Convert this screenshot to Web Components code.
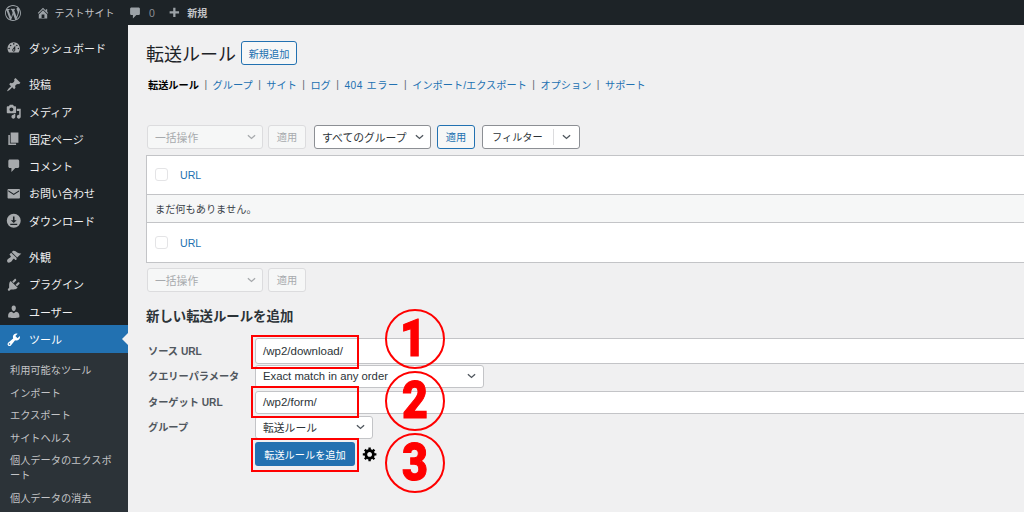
<!DOCTYPE html>
<html lang="ja"><head><meta charset="utf-8"><title>転送ルール</title>
<style>
html,body{margin:0;padding:0;height:512px;overflow:hidden;background:#f0f0f1}
body{font-family:"Liberation Sans","Noto Sans CJK JP",sans-serif;font-size:10.2px;color:#3c434a;position:relative}
wp-shell{width:1024px;height:512px}
</style></head><body>
<wp-shell>
  <wp-adminbar slot="bar"></wp-adminbar>
  <wp-sidebar slot="side">
    <wp-menu icon="dash">ダッシュボード</wp-menu>
    <wp-gap></wp-gap>
    <wp-menu icon="pin">投稿</wp-menu>
    <wp-menu icon="media">メディア</wp-menu>
    <wp-menu icon="page">固定ページ</wp-menu>
    <wp-menu icon="comment">コメント</wp-menu>
    <wp-menu icon="mail">お問い合わせ</wp-menu>
    <wp-menu icon="down">ダウンロード</wp-menu>
    <wp-gap></wp-gap>
    <wp-menu icon="brush">外観</wp-menu>
    <wp-menu icon="plug">プラグイン</wp-menu>
    <wp-menu icon="user">ユーザー</wp-menu>
    <wp-menu icon="tool" current>ツール</wp-menu>
    <wp-submenu>
      <wp-subitem>利用可能なツール</wp-subitem>
      <wp-subitem>インポート</wp-subitem>
      <wp-subitem>エクスポート</wp-subitem>
      <wp-subitem>サイトヘルス</wp-subitem>
      <wp-subitem>個人データのエクスポート</wp-subitem>
      <wp-subitem>個人データの消去</wp-subitem>
    </wp-submenu>
  </wp-sidebar>
  <wp-main slot="main">
    <wp-title>転送ルール</wp-title>
    <wp-tabs></wp-tabs>
    <wp-toolbar top></wp-toolbar>
    <wp-table></wp-table>
    <wp-toolbar></wp-toolbar>
    <wp-addform></wp-addform>
  </wp-main>
  <wp-marks slot="main"></wp-marks>
</wp-shell>
<script>
const P={
wp:'M20 10c0-5.51-4.49-10-10-10C4.48 0 0 4.49 0 10c0 5.52 4.48 10 10 10 5.51 0 10-4.48 10-10zM7.78 15.37L4.37 6.22c.55-.02 1.17-.08 1.17-.08.5-.06.44-1.13-.06-1.11 0 0-1.45.11-2.37.11-.18 0-.37 0-.58-.01C4.12 2.69 6.87 1.11 10 1.11c2.33 0 4.45.87 6.05 2.34-.68-.11-1.65.39-1.65 1.58 0 .74.45 1.36.9 2.1.35.61.55 1.36.55 2.46 0 1.49-1.4 5-1.4 5l-3.03-8.37c.54-.02.82-.17.82-.17.5-.05.44-1.25-.06-1.22 0 0-1.44.12-2.38.12-.87 0-2.33-.12-2.33-.12-.5-.03-.56 1.2-.06 1.22l.92.08 1.26 3.41zM17.41 10c.24-.64.74-1.87.43-4.25.7 1.29 1.05 2.71 1.05 4.25 0 3.29-1.73 6.24-4.4 7.78.97-2.59 1.94-5.2 2.92-7.78zM6.1 18.09C3.12 16.65 1.11 13.53 1.11 10c0-1.3.23-2.48.72-3.59C3.25 10.3 4.67 14.2 6.1 18.09zm4.03-6.63l2.58 6.98c-.86.29-1.76.45-2.71.45-.79 0-1.57-.11-2.29-.33.81-2.38 1.62-4.74 2.42-7.1z',
home:'M16 8.5l1.53 1.53-1.06 1.06L10 4.62l-6.47 6.47-1.06-1.06L10 2.5l4 4v-2h2v4zm-6-2.46l6 5.99V18H4v-5.97zM12 17v-5H8v5h4z',
comment:'M5 2h10c1.1 0 2 .9 2 2v7c0 1.1-.9 2-2 2h-3l-5 5v-5H5c-1.1 0-2-.9-2-2V4c0-1.1.9-2 2-2z',
plus:'M17 8v3.5h-5.5V17H8v-5.5H2.5V8H8V2.5h3.5V8z',
dash:'M3.76 16h12.48c1.1-1.37 1.76-3.11 1.76-5 0-4.42-3.58-8-8-8s-8 3.58-8 8c0 1.89.66 3.63 1.76 5zM10 4c.55 0 1 .45 1 1s-.45 1-1 1-1-.45-1-1 .45-1 1-1zM6 6c.55 0 1 .45 1 1s-.45 1-1 1-1-.45-1-1 .45-1 1-1zm8 0c.55 0 1 .45 1 1s-.45 1-1 1-1-.45-1-1 .45-1 1-1zm-5.37 5.55L12 7v6c0 1.1-.9 2-2 2s-2-.9-2-2c0-.57.24-1.08.63-1.45zM4 10c.55 0 1 .45 1 1s-.45 1-1 1-1-.45-1-1 .45-1 1-1zm12 0c.55 0 1 .45 1 1s-.45 1-1 1-1-.45-1-1 .45-1 1-1zm-5 3c0-.55-.45-1-1-1s-1 .45-1 1 .45 1 1 1 1-.45 1-1z',
pin:'M10.44 3.02l1.82-1.82 6.36 6.35-1.83 1.82c-1.05-.68-2.48-.57-3.41.36l-.75.75c-.92.93-1.04 2.36-.35 3.41l-1.83 1.82-2.41-2.41-2.8 2.79c-.42.42-3.38 2.71-3.8 2.29s1.86-3.39 2.28-3.81l2.79-2.79L4.1 9.36l1.83-1.82c1.05.69 2.48.57 3.4-.36l.75-.75c.93-.92 1.05-2.35.36-3.41z',
media:'M13 11V4c0-.55-.45-1-1-1h-1.67L9 1H5L3.67 3H2c-.55 0-1 .45-1 1v7c0 .55.45 1 1 1h10c.55 0 1-.45 1-1zM7 4.5c1.38 0 2.5 1.12 2.5 2.5S8.38 9.5 7 9.5 4.5 8.38 4.5 7 5.62 4.5 7 4.5zM14 6h5v10.5c0 1.38-1.12 2.5-2.5 2.5S14 17.88 14 16.5s1.12-2.5 2.5-2.5c.17 0 .34.02.5.05V9h-3V6zm-4 8.05V13h2v3.5c0 1.38-1.12 2.5-2.5 2.5S7 17.88 7 16.5 8.12 14 9.5 14c.17 0 .34.02.5.05z',
page:'M6 15V2h10v13H6zm-1 1h8v2H3V5h2v11z',
mail:'M3 4h14c.55 0 1 .45 1 1v10c0 .55-.45 1-1 1H3c-.55 0-1-.45-1-1V5c0-.55.45-1 1-1zm14 3V5.5L10 10 3 5.5V7l7 4.5z',
down:'M10 1a9 9 0 110 18 9 9 0 010-18zM9 4.5v5H6.2L10 13l3.8-3.5H11v-5zM5.5 14v1.5h9V14z',
brush:'M14.48 11.06L7.41 3.99l1.5-1.5c.5-.56 2.3-.47 3.51.32 1.21.8 1.43 1.28 2.91 2.1 1.18.64 2.45 1.26 4.45.85zm-.71.71L6.7 4.7 4.93 6.47c-.39.39-.39 1.02 0 1.41l1.06 1.06c.39.39.39 1.03 0 1.42-.6.6-1.43 1.11-2.21 1.69-.35.26-.7.53-1.01.84C1.43 13.23.91 15.7 2 17.01c1.1 1.1 3.56.58 4.92-.79.31-.31.58-.66.84-1.01.58-.78 1.09-1.61 1.69-2.21.39-.39 1.02-.39 1.41 0l1.06 1.06c.39.39 1.03.39 1.42 0z',
plug:'M13.11 4.36L9.87 7.6 8 5.73l3.24-3.24c.35-.34 1.05-.2 1.56.32.52.51.66 1.21.31 1.55zm-8 1.77l.91-1.12 9.01 9.01-1.19.84c-.71.71-2.63 1.16-3.82 1.16H6.14L4.9 17.26c-.59.59-1.54.59-2.12 0-.59-.58-.59-1.53 0-2.12l1.24-1.24v-3.88c0-1.13.4-3.19 1.09-3.89zm7.26 3.97l3.24-3.24c.34-.35 1.04-.21 1.55.31.52.51.66 1.21.31 1.55l-3.24 3.25z',
user:'M10 9.25c-2.27 0-2.73-3.44-2.73-3.44C7 4.02 7.82 2 9.97 2c2.16 0 2.98 2.02 2.71 3.81 0 0-.41 3.44-2.68 3.44zm0 2.57L12.72 10c2.39 0 4.52 2.33 4.52 4.53v2.49s-3.65 1.13-7.24 1.13c-3.65 0-7.24-1.13-7.24-1.13v-2.49c0-2.25 1.94-4.48 4.47-4.48z',
tool:'M16.68 9.77c-1.34 1.34-3.3 1.67-4.95.99l-5.41 6.52c-.99.99-2.59.99-3.58 0s-.99-2.59 0-3.57l6.52-5.42c-.68-1.65-.35-3.61.99-4.95 1.28-1.28 3.12-1.62 4.72-1.06l-2.89 2.89 2.82 2.82 2.86-2.87c.53 1.58.18 3.39-1.08 4.65zM3.81 16.21c.4.39 1.04.39 1.43 0 .4-.4.4-1.04 0-1.43-.39-.4-1.03-.4-1.43 0-.39.39-.39 1.03 0 1.43z',
gear:'M18 12h-2.18c-.17.7-.44 1.35-.81 1.93l1.54 1.54-2.1 2.1-1.54-1.54c-.58.36-1.23.63-1.91.79V19H8v-2.18c-.68-.16-1.33-.43-1.91-.79l-1.54 1.54-2.12-2.12 1.54-1.54c-.36-.58-.63-1.23-.79-1.91H1V9.03h2.17c.16-.7.44-1.35.8-1.94L2.43 5.55l2.1-2.1 1.54 1.54c.58-.37 1.24-.64 1.93-.81V2h3v2.18c.68.16 1.33.43 1.91.79l1.54-1.54 2.12 2.12-1.54 1.54c.36.59.64 1.24.8 1.94H18V12zm-8.5 1.5c1.66 0 3-1.34 3-3s-1.34-3-3-3-3 1.34-3 3 1.34 3 3 3z'
};
const ico=(n,s,st='')=>`<svg width="${s}" height="${s}" viewBox="0 0 20 20" fill="currentColor" style="flex:none;${st}"><path fill-rule="evenodd" d="${P[n]}"/></svg>`;
const chev=(c='#50575e')=>`<svg width="9" height="6" viewBox="0 0 10 6" style="flex:none"><path d="M1 1l4 3.6L9 1" fill="none" stroke="${c}" stroke-width="1.5"/></svg>`;
function def(name,html){customElements.define(name,class extends HTMLElement{
  connectedCallback(){if(this.shadowRoot)return;const r=this.attachShadow({mode:'open'});r.innerHTML=typeof html==='function'?html(this):html;}
});}

def('wp-shell',`<style>:host{display:grid;grid-template-columns:128px 1fr;grid-template-rows:25px 1fr;overflow:hidden;position:relative}
::slotted([slot=bar]){grid-column:1/3}
.m{position:relative;overflow:hidden;min-width:0}</style>
<slot name="bar"></slot><slot name="side"></slot><div class="m"><slot name="main"></slot></div>`);

def('wp-adminbar',`<style>:host{display:flex;align-items:center;background:#1d2327;color:#c3c4c7;font-size:10px;height:25px;padding-left:5px;box-sizing:border-box}
.g{display:flex;align-items:center}svg{color:#9ca2a7}</style>
${ico('wp',16)}
<span class="g" style="margin-left:14.5px">${ico('home',14)}<span style="margin-left:5px;width:60px">テストサイト</span></span>
<span class="g" style="margin-left:13.5px">${ico('comment',14)}<span style="margin-left:7px;color:#8c8f94;font-size:10.5px">0</span></span>
<span class="g" style="margin-left:13.5px">${ico('plus',13)}<span style="margin-left:6px;font-weight:700">新規</span></span>`);

def('wp-sidebar',`<style>:host{display:block;background:#1d2327;padding-top:9px;height:487px;overflow:hidden;box-sizing:border-box}</style><slot></slot>`);
def('wp-gap',`<style>:host{display:block;height:9.4px}</style>`);
def('wp-menu',h=>{const c=h.hasAttribute('current');return `<style>:host{display:flex;align-items:center;height:${c?28:27.25}px;box-sizing:border-box;padding-left:6px;gap:7.5px;color:${c?'#fff':'#f0f0f1'};font-size:11px;position:relative;background:${c?'#2271b1':'transparent'}}
svg{color:${c?'#fff':'#a7aaad'}}
.a{position:absolute;right:0;top:50%;margin-top:-6px;border:6px solid transparent;border-right-color:#f0f0f1;border-left:0}</style>${ico(h.getAttribute('icon'),15.5)}<slot></slot>${c?'<i class="a"></i>':''}`});
def('wp-submenu',`<style>:host{display:block;background:#2c3338;padding:6px 0 20px}</style><slot></slot>`);
def('wp-subitem',`<style>:host{display:block;padding:3.8px 10px 3.8px 10px;color:#c3c4c7;font-size:10.2px;line-height:15px}</style><slot></slot>`);

def('wp-main',`<style>:host{display:block;padding:16px 0 0 18px;box-sizing:border-box;height:487px;width:916px}</style><slot></slot>`);
def('wp-title',`<style>:host{display:flex;align-items:center;height:24px;gap:5px;color:#1d2327;font-size:18px}
.b{display:flex;align-items:center;justify-content:center;width:56px;height:24px;box-sizing:border-box;border:1px solid #2271b1;border-radius:3px;background:#f6f7f7;color:#2271b1;font-size:10.2px}</style>
<span><slot></slot></span><span class="b">新規追加</span>`);
def('wp-tabs',`<style>:host{display:flex;align-items:center;height:16px;margin:11.5px 0 0 2px;font-size:10.2px;color:#2271b1}
b{color:#000;font-weight:700}i{font-style:normal;color:#646970;width:13.6px;text-align:center;flex:none}span,b{white-space:nowrap}</style>
<b>転送ルール</b><i>|</i><span>グループ</span><i>|</i><span>サイト</span><i>|</i><span>ログ</span><i>|</i><span style="letter-spacing:.55px">404 エラー</span><i>|</i><span>インポート/エクスポート</span><i>|</i><span>オプション</span><i>|</i><span>サポート</span>`);

const selD=(t,w)=>`<div class="s d" style="width:${w}px"><span>${t}</span>${chev('#a7aaad')}</div>`;
def('wp-toolbar',h=>{const top=h.hasAttribute('top');return `<style>:host{display:flex;gap:5px;height:24px;margin:${top?32:5}px 0 0 1px;font-size:10.2px}
.s,.b{display:flex;align-items:center;box-sizing:border-box;border-radius:3px;border:1px solid #8c8f94;background:#fff;color:#2c3338;justify-content:space-between}
.s{padding:0 6px 0 7px;font-size:10.8px}
.d{background:#f6f7f7;border-color:#dcdcde;color:#a7aaad}
.b{justify-content:center;width:38px;background:#f6f7f7;border-color:#dcdcde;color:#a7aaad}
.a{border-color:#2271b1;color:#2271b1}
.f{width:98px;padding:0;justify-content:flex-start;font-size:10.2px}
.f span{width:71px;padding-left:9px;box-sizing:border-box;border-right:1px solid #dcdcde;height:16px;line-height:17px}
.f svg{margin-left:7.5px}</style>
${selD('一括操作',116)}<div class="b">適用</div>
${top?`<div class="s" style="width:117px;margin-left:3px"><span>すべてのグループ</span>${chev()}</div><div class="b a" style="margin-left:1px">適用</div><div class="s f" style="margin-left:2px"><span>フィルター</span>${chev()}</div>`:''}`});

def('wp-table',`<style>:host{display:block;width:900px;border:1px solid #c3c4c7;border-right:0;background:#fff;margin-top:6px;font-size:10.2px}
.r{display:flex;align-items:center;padding-left:8px;height:38.5px;box-sizing:border-box}
.c{width:13px;height:13px;box-sizing:border-box;border:1px solid #e4e4e6;border-radius:3px;background:#fff;margin-right:12px}
a{color:#2271b1;padding-top:1px;font-size:10.6px}
.e{height:29px;background:#f6f7f7;border-top:1px solid #c3c4c7;border-bottom:1px solid #c3c4c7}</style>
<div class="r"><span class="c"></span><a>URL</a></div><div class="r e">まだ何もありません。</div><div class="r"><span class="c"></span><a>URL</a></div>`);

def('wp-addform',`<style>:host{display:block;margin-top:15.5px;font-size:10.2px}
h2{margin:0 0 11px;font-size:13.4px;line-height:20px;font-weight:700;color:#2c3338}
.row{display:grid;grid-template-columns:109px 1fr;align-items:center}
label{padding:0 0 1px 2px;font-weight:700;color:#50575e;font-size:10.2px;white-space:nowrap}
.i,.s{box-sizing:border-box;border:1px solid #c3c4c7;background:#fff;display:flex;align-items:center;padding-left:7px;color:#2c3338;font-size:11.5px}
.i{width:800px;border-radius:3px 0 0 3px}
.s{border-radius:3px;justify-content:space-between;padding-right:7px}
.b{display:flex;align-items:center;gap:7px}
.p{display:flex;align-items:center;justify-content:center;width:100px;height:24px;border-radius:3px;background:#2271b1;color:#fff;font-size:10.2px}</style>
<h2>新しい転送ルールを追加</h2>
<div class="row" style="height:26px;margin-bottom:.5px"><label>ソース URL</label><div class="i" style="height:26px">/wp2/download/</div></div>
<div class="row" style="height:23px;margin-bottom:3px"><label>クエリーパラメータ</label><div class="s" style="height:23px;width:229px;font-size:11.3px"><span>Exact match in any order</span>${chev()}</div></div>
<div class="row" style="height:23px;margin-bottom:2px"><label>ターゲット URL</label><div class="i" style="height:23px">/wp2/form/</div></div>
<div class="row" style="height:23px;margin-bottom:3.5px"><label>グループ</label><div class="s" style="height:23px;width:118px;font-size:10.8px"><span>転送ルール</span>${chev()}</div></div>
<div class="row" style="height:24px"><span></span><div class="b"><div class="p">転送ルールを追加</div><span style="color:#000;display:flex">${ico('gear',16)}</span></div></div>`);

def('wp-marks',`<style>:host{position:absolute;inset:0;pointer-events:none}
.r{position:absolute;box-sizing:border-box;left:122.5px;width:108.5px;border:2.5px solid #f00}
.c{position:absolute;left:257px;width:60px;height:60px;box-sizing:border-box;border:2px solid #f00;border-radius:50%;display:flex;align-items:center;justify-content:center;color:#f00;font:900 52px/1 Roboto,"Liberation Sans",sans-serif;-webkit-text-stroke:1.1px #f00}
.c span{display:block;transform:scaleX(.86)}</style>
<div class="r" style="top:309.5px;height:34px"></div>
<div class="r" style="top:361px;height:32px"></div>
<div class="r" style="top:413px;height:33.5px"></div>
<div class="c" style="top:284px"><span style="margin-left:-3px">1</span></div>
<div class="c" style="top:346px"><span>2</span></div>
<div class="c" style="top:408px"><span>3</span></div>`);
</script>
</body></html>
